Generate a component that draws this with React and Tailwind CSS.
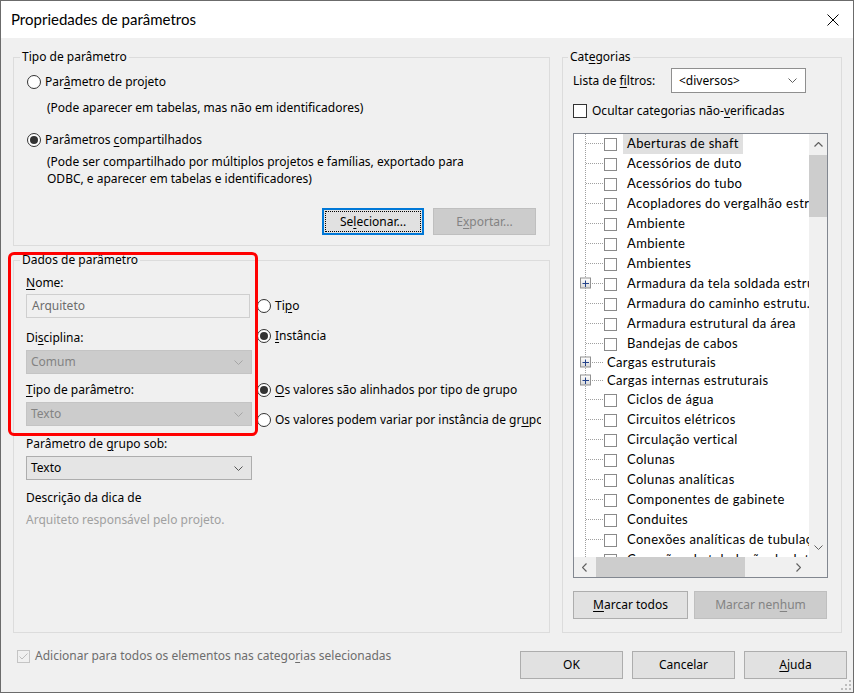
import React from "react";

function U({ children }) {
  return <span className="underline decoration-1 underline-offset-2">{children}</span>;
}

function Radio({ checked, children, className = "" }) {
  return (
    <div className={`flex items-center h-[20px] ${className}`}>
      <span className="w-[14px] h-[14px] rounded-full border border-[#333333] bg-white flex items-center justify-center shrink-0">
        {checked ? <span className="w-[8px] h-[8px] rounded-full bg-[#333333]" /> : null}
      </span>
      <span className="ml-[4px] whitespace-nowrap">{children}</span>
    </div>
  );
}

function Btn({ children, className = "", disabled }) {
  return (
    <div
      className={`flex items-center justify-center border ${
        disabled ? "bg-[#cccccc] border-[#bfbfbf] text-[#838383]" : "bg-[#e1e1e1] border-[#adadad] text-black"
      } ${className}`}
    >
      {children}
    </div>
  );
}

function ChevDown({ color = "#606060" }) {
  return (
    <svg width="9" height="5" viewBox="0 0 9 5" className="shrink-0">
      <path d="M0.5 0.5L4.5 4.5L8.5 0.5" fill="none" stroke={color} strokeWidth="1" />
    </svg>
  );
}
function ChevUp({ color = "#606060" }) {
  return (
    <svg width="9" height="5" viewBox="0 0 9 5">
      <path d="M0.5 4.5L4.5 0.5L8.5 4.5" fill="none" stroke={color} strokeWidth="1.2" />
    </svg>
  );
}
function ChevLeft({ color = "#606060" }) {
  return (
    <svg width="5" height="9" viewBox="0 0 5 9">
      <path d="M4.5 0.5L0.5 4.5L4.5 8.5" fill="none" stroke={color} strokeWidth="1.2" />
    </svg>
  );
}
function ChevRight({ color = "#606060" }) {
  return (
    <svg width="5" height="9" viewBox="0 0 5 9">
      <path d="M0.5 0.5L4.5 4.5L0.5 8.5" fill="none" stroke={color} strokeWidth="1.2" />
    </svg>
  );
}

function Select({ value, className = "", textClass = "", chev = "#606060" }) {
  return (
    <div className={`flex items-center justify-between pl-[4px] pr-[8px] ${className}`}>
      <span className={textClass}>{value}</span>
      <ChevDown color={chev} />
    </div>
  );
}

const rows = [
  { t: "Aberturas de shaft", sel: true },
  { t: "Acessórios de duto" },
  { t: "Acessórios do tubo" },
  { t: "Acopladores do vergalhão estrutural" },
  { t: "Ambiente" },
  { t: "Ambiente" },
  { t: "Ambientes" },
  { t: "Armadura da tela soldada estrutural", plus: true },
  { t: "Armadura do caminho estrutu..." },
  { t: "Armadura estrutural da área" },
  { t: "Bandejas de cabos" },
  { t: "Cargas estruturais", plus: true, nocb: true },
  { t: "Cargas internas estruturais", plus: true, nocb: true },
  { t: "Ciclos de água" },
  { t: "Circuitos elétricos" },
  { t: "Circulação vertical" },
  { t: "Colunas" },
  { t: "Colunas analíticas" },
  { t: "Componentes de gabinete" },
  { t: "Conduites" },
  { t: "Conexões analíticas de tubulação" },
  { t: "Conexões de tubulação de duto" },
];

function Connector({ h, plus, nocb }) {
  const c = h / 2 - 1;
  return (
    <svg width="30" height={h} className="shrink-0">
      <defs>
        <linearGradient id="pg" x1="0" y1="0" x2="0" y2="1">
          <stop offset="0" stopColor="#ffffff" />
          <stop offset="1" stopColor="#d8d8d8" />
        </linearGradient>
      </defs>
      <line x1="11.5" y1="0" x2="11.5" y2={h} stroke="#a0a0a0" strokeDasharray="1 1" />
      <line x1="12" y1={c + 0.5} x2={nocb ? 31 : 29} y2={c + 0.5} stroke="#a0a0a0" strokeDasharray="1 1" />
      {plus ? (
        <g>
          <rect x="6.5" y={c - 5} width="10" height="10" fill="url(#pg)" stroke="#919191" />
          <line x1="8.5" y1={c + 0.5} x2="15" y2={c + 0.5} stroke="#24438a" />
          <line x1="11.5" y1={c - 2.5} x2="11.5" y2={c + 4} stroke="#24438a" />
        </g>
      ) : null}
    </svg>
  );
}

function TreeRow({ t, sel, plus, nocb }) {
  const h = nocb ? 18 : 20;
  return (
    <div className={`flex items-center whitespace-nowrap ${nocb ? "h-[18px]" : "h-[20px]"}`}>
      <Connector h={h} plus={plus} nocb={nocb} />
      {nocb ? (
        <span className="ml-[3px] shrink-0">{t}</span>
      ) : (
        <>
          <span className="w-[13px] h-[13px] border border-[#8a8a8a] bg-white shrink-0" />
          <span className={`ml-[6px] px-[4px] h-full flex items-center shrink-0 ${sel ? "bg-[#e0e0e0]" : ""}`}>{t}</span>
        </>
      )}
    </div>
  );
}

function Tree() {
  return (
    <div className="w-[255px] h-[445px] border border-[#828790] bg-white flex flex-col">
      <div className="flex flex-1 min-h-0">
        <div className="flex-1 min-w-0 overflow-hidden [font-family:Lato,sans-serif] text-[13px] tracking-[0.35px] text-black">
          {rows.map((r, i) => (
            <TreeRow key={i} {...r} />
          ))}
        </div>
        <div className="w-[18px] bg-[#f0f0f0] flex flex-col">
          <div className="h-[21px] flex items-center justify-center">
            <ChevUp />
          </div>
          <div className="h-[62px] bg-[#cdcdcd]" />
          <div className="flex-1" />
          <div className="h-[20px] flex items-center justify-center">
            <ChevDown />
          </div>
        </div>
      </div>
      <div className="h-[20px] flex bg-[#f0f0f0]">
        <div className="w-[21px] flex items-center justify-center">
          <ChevLeft />
        </div>
        <div className="w-[149px] ml-[1px] bg-[#cdcdcd]" />
        <div className="flex-1" />
        <div className="w-[21px] flex items-center justify-center">
          <ChevRight />
        </div>
        <div className="w-[18px]" />
      </div>
    </div>
  );
}

export default function App() {
  return (
    <div className="w-[854px] h-[693px] border border-[#6b6b6b] bg-[#f0f0f0] flex flex-col relative text-[12px] text-black [font-family:'Noto_Sans','Open_Sans',sans-serif] overflow-hidden">
      {/* Title bar */}
      <div className="h-[37px] bg-white flex items-center justify-between pl-[10px] pr-[14px] shrink-0">
        <span className="text-[15px] [font-family:Lato,sans-serif]">Propriedades de parâmetros</span>
        <svg width="12" height="12" viewBox="0 0 12 12">
          <path d="M0.5 0.5L11.5 11.5M11.5 0.5L0.5 11.5" stroke="#000" strokeWidth="1" />
        </svg>
      </div>

      {/* Body */}
      <div className="flex-1 flex flex-col pl-[12px] pt-[11px]">
        <div className="flex gap-[12px]">
          {/* Left column */}
          <div className="w-[537px] flex flex-col">
            <fieldset className="border border-[#dcdcdc] h-[197px] min-w-0">
              <legend className="ml-[6px] px-[2px] leading-[16px]">Tipo de parâmetro</legend>
              <div className="px-[13px]">
                <Radio className="mt-[7px]">
                  Par<U>â</U>metro de projeto
                </Radio>
                <div className="mt-[8px] ml-[20px] leading-[16px]">(Pode aparecer em tabelas, mas não em identificadores)</div>
                <Radio checked className="mt-[14px]">
                  Parâmetros <U>c</U>ompartilhados
                </Radio>
                <div className="mt-[3px] ml-[20px] leading-[17px]">
                  (Pode ser compartilhado por múltiplos projetos e famílias, exportado para
                  <br />
                  ODBC, e aparecer em tabelas e identificadores)
                </div>
                <div className="flex justify-end gap-[9px] mt-[21px]">
                  <div className="w-[102px] h-[27px] border-2 border-[#0078d7] bg-[#e1e1e1] p-[1px]">
                    <div className="w-full h-full border border-dotted border-black flex items-center justify-center">
                      Se<U>l</U>ecionar...
                    </div>
                  </div>
                  <Btn disabled className="w-[103px] h-[27px]">
                    E<U>x</U>portar...
                  </Btn>
                </div>
              </div>
            </fieldset>

            <fieldset className="border border-[#dcdcdc] h-[381px] mt-[6px] min-w-0">
              <legend className="ml-[6px] px-[2px] leading-[16px]">Dados de parâmetro</legend>
              <div className="flex">
                <div className="ml-[12px] w-[226px] flex flex-col">
                  <div className="mt-[7px] leading-[16px]">
                    <U>N</U>ome:
                  </div>
                  <div className="mt-[3px] w-[224px] h-[24px] border border-[#cfcfcf] bg-[#f0f0f0] flex items-center pl-[5px] text-[#6d6d6d]">
                    Arquiteto
                  </div>
                  <div className="mt-[12px] leading-[16px]">
                    Di<U>s</U>ciplina:
                  </div>
                  <Select
                    value="Comum"
                    className="mt-[4px] h-[24px] bg-[#cccccc] border border-[#c4c4c4]"
                    textClass="text-[#838383]"
                    chev="#a5a5a5"
                  />
                  <div className="mt-[8px] leading-[16px]">
                    <U>T</U>ipo de parâmetro:
                  </div>
                  <Select
                    value="Texto"
                    className="mt-[4px] h-[24px] bg-[#cccccc] border border-[#c4c4c4]"
                    textClass="text-[#838383]"
                    chev="#a5a5a5"
                  />
                  <div className="mt-[10px] leading-[16px]">
                    Parâmetro de <U>g</U>rupo sob:
                  </div>
                  <Select value="Texto" className="mt-[4px] h-[24px] bg-[#e5e5e5] border border-[#adadad]" chev="#555555" />
                  <div className="mt-[10px] leading-[16px]">Descrição da dica de</div>
                  <div className="mt-[6px] leading-[16px] text-[#a0a0a0]">Arquiteto responsável pelo projeto.</div>
                </div>
                <div className="ml-[5px] w-[284px] overflow-hidden flex flex-col">
                  <Radio className="mt-[28px]">
                    Ti<U>p</U>o
                  </Radio>
                  <Radio checked className="mt-[10px]">
                    <U>I</U>nstância
                  </Radio>
                  <Radio checked className="mt-[34px]">
                    <U>O</U>s valores são alinhados por tipo de grupo
                  </Radio>
                  <Radio className="mt-[10px]">
                    Os valores podem variar por instância de gr<U>u</U>po
                  </Radio>
                </div>
              </div>
            </fieldset>
          </div>

          {/* Right column */}
          <fieldset className="border border-[#dcdcdc] w-[280px] h-[584px] min-w-0">
            <legend className="ml-[5px] px-[2px] leading-[16px]">
              Cat<U>e</U>gorias
            </legend>
            <div className="pl-[10px] flex flex-col">
              <div className="flex items-center mt-[3px] h-[25px]">
                <span className="w-[98px]">
                  Lista de <U>f</U>iltros:
                </span>
                <Select value="<diversos>" className="w-[135px] h-[25px] bg-white border border-[#8f8f8f] pl-[7px]" />
              </div>
              <div className="flex items-center mt-[10px] h-[16px]">
                <span className="w-[14px] h-[14px] border border-[#333333] bg-white shrink-0" />
                <span className="ml-[5px]">
                  Ocultar categorias não-<U>v</U>erificadas
                </span>
              </div>
              <div className="mt-[14px]">
                <Tree />
              </div>
              <div className="flex gap-[6px] mt-[13px]">
                <Btn className="w-[115px] h-[28px]">
                  <U>M</U>arcar todos
                </Btn>
                <Btn disabled className="w-[133px] h-[28px]">
                  Marcar nen<U>h</U>um
                </Btn>
              </div>
            </div>
          </fieldset>
        </div>

        {/* Bottom */}
        <div className="flex items-start justify-between mt-[16px] pr-[6px]">
          <div className="flex items-center h-[14px] ml-[4px] text-[#6d6d6d]">
            <span className="w-[13px] h-[13px] border border-[#c4c4c4] bg-[#f0f0f0] flex items-center justify-center shrink-0">
              <svg width="9" height="7" viewBox="0 0 9 7">
                <path d="M0.5 3.5L3 6L8.5 0.5" fill="none" stroke="#bcbcbc" strokeWidth="1" />
              </svg>
            </span>
            <span className="ml-[5px]">
              Adicionar para todos os elementos nas catego<U>r</U>ias selecionadas
            </span>
          </div>
          <div className="flex gap-[9px] mt-[2px]">
            <Btn className="w-[103px] h-[28px]">OK</Btn>
            <Btn className="w-[103px] h-[28px]">Cancelar</Btn>
            <Btn className="w-[103px] h-[28px]">
              <U>A</U>juda
            </Btn>
          </div>
        </div>
      </div>

      {/* red annotation rectangle */}
      <div className="absolute left-[7px] top-[251px] w-[250px] h-[184px] border-[3px] border-[#ff0000] rounded-[6px] pointer-events-none" />

      {/* resize grip */}
      <svg width="10" height="10" viewBox="0 0 10 10" className="absolute right-[2px] bottom-[2px]">
        <rect x="8" y="0" width="2" height="2" fill="#bdbdbd" />
        <rect x="4" y="4" width="2" height="2" fill="#bdbdbd" />
        <rect x="8" y="4" width="2" height="2" fill="#bdbdbd" />
        <rect x="0" y="8" width="2" height="2" fill="#bdbdbd" />
        <rect x="4" y="8" width="2" height="2" fill="#bdbdbd" />
        <rect x="8" y="8" width="2" height="2" fill="#bdbdbd" />
      </svg>
    </div>
  );
}
